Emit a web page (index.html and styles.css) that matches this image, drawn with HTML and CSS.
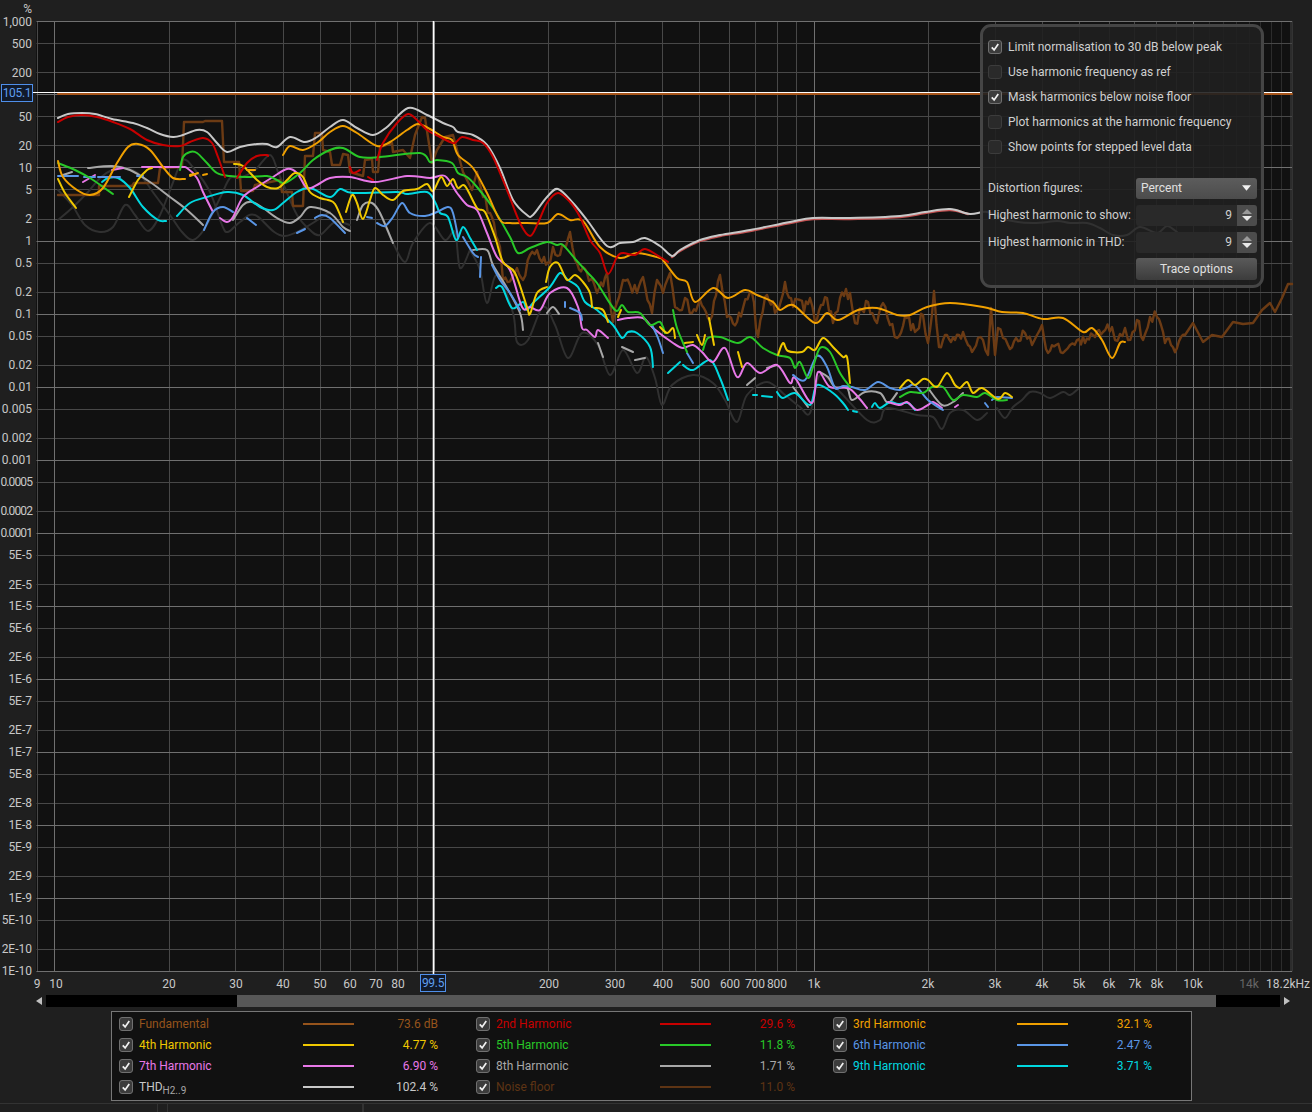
FILE: index.html
```html
<!DOCTYPE html>
<html lang="en">
<head>
<meta charset="utf-8">
<title>Distortion</title>
<link rel="stylesheet" href="styles.css">
</head>
<body>
<main class="app">
  <section class="chart">
    <svg class="plot" id="plot" width="1312" height="992" viewBox="0 0 1312 992">
      <rect class="plot-bg" x="36" y="21" width="1256" height="950"/>
      <g id="grid"></g>
      <g id="traces"></g>
      <line class="cursor" x1="33" y1="92.5" x2="1292" y2="92.5"/>
      <line class="cursor cursor-v" x1="433.5" y1="21" x2="433.5" y2="975"/>
      <g class="ticks y-ticks">
        <text x="32" y="13">%</text>
        <text x="32" y="26">1,000</text><text x="32" y="48">500</text><text x="32" y="77">200</text>
        <text x="32" y="121">50</text><text x="32" y="150">20</text><text x="32" y="172">10</text>
        <text x="32" y="194">5</text><text x="32" y="223">2</text><text x="32" y="245">1</text>
        <text x="32" y="267">0.5</text><text x="32" y="296">0.2</text><text x="32" y="318">0.1</text>
        <text x="32" y="340">0.05</text><text x="32" y="369">0.02</text><text x="32" y="391">0.01</text>
        <text x="32" y="413">0.005</text><text x="32" y="442">0.002</text><text x="32" y="464">0.001</text>
        <text x="32" y="486" class="tight">0.0005</text><text x="32" y="515" class="tight">0.0002</text><text x="32" y="537" class="tight">0.0001</text>
        <text x="32" y="559">5E-5</text><text x="32" y="589">2E-5</text><text x="32" y="610">1E-5</text>
        <text x="32" y="632">5E-6</text><text x="32" y="661">2E-6</text><text x="32" y="683">1E-6</text>
        <text x="32" y="705">5E-7</text><text x="32" y="734">2E-7</text><text x="32" y="756">1E-7</text>
        <text x="32" y="778">5E-8</text><text x="32" y="807">2E-8</text><text x="32" y="829">1E-8</text>
        <text x="32" y="851">5E-9</text><text x="32" y="880">2E-9</text><text x="32" y="902">1E-9</text>
        <text x="32" y="924">5E-10</text><text x="32" y="953">2E-10</text><text x="32" y="975">1E-10</text>
      </g>
      <g class="ticks x-ticks">
        <text x="37" y="988">9</text><text x="56" y="988">10</text><text x="169" y="988">20</text>
        <text x="236" y="988">30</text><text x="283" y="988">40</text><text x="320" y="988">50</text>
        <text x="350" y="988">60</text><text x="376" y="988">70</text><text x="398" y="988">80</text>
        <text x="549" y="988">200</text><text x="615" y="988">300</text><text x="663" y="988">400</text>
        <text x="700" y="988">500</text><text x="730" y="988">600</text><text x="755" y="988">700</text>
        <text x="777" y="988">800</text><text x="814" y="988">1k</text><text x="928" y="988">2k</text>
        <text x="995" y="988">3k</text><text x="1042" y="988">4k</text><text x="1079" y="988">5k</text>
        <text x="1109" y="988">6k</text><text x="1135" y="988">7k</text><text x="1157" y="988">8k</text>
        <text x="1193" y="988">10k</text><text x="1249" y="988" class="dim">14k</text>
        <text x="1288" y="988">18.2kHz</text>
      </g>
      <rect class="read-box" x="1.5" y="84.5" width="31" height="17"/>
      <text class="read-text" x="17" y="97">105.1</text>
      <rect class="read-box" x="420.5" y="974.5" width="25" height="17"/>
      <text class="read-text" x="433" y="987">99.5</text>
    </svg>

    <aside class="panel">
      <label class="check-row"><span class="box on"><svg viewBox="0 0 14 14"><path d="M3.2 7.4 6 10.4 10.8 3.6"/></svg></span>Limit normalisation to 30 dB below peak</label>
      <label class="check-row"><span class="box"></span>Use harmonic frequency as ref</label>
      <label class="check-row"><span class="box on"><svg viewBox="0 0 14 14"><path d="M3.2 7.4 6 10.4 10.8 3.6"/></svg></span>Mask harmonics below noise floor</label>
      <label class="check-row"><span class="box"></span>Plot harmonics at the harmonic frequency</label>
      <label class="check-row"><span class="box"></span>Show points for stepped level data</label>
      <div class="field first">
        <span class="field-label">Distortion figures:</span>
        <div class="select">Percent<svg viewBox="0 0 10 6"><path d="M0 0H10L5 6Z"/></svg></div>
      </div>
      <div class="field">
        <span class="field-label">Highest harmonic to show:</span>
        <div class="spin"><span class="spin-val">9</span><span class="spin-btn"><svg viewBox="0 0 10 14"><path class="up" d="M0 6 5 1 10 6Z"/><path d="M0 8H10L5 13Z"/></svg></span></div>
      </div>
      <div class="field">
        <span class="field-label">Highest harmonic in THD:</span>
        <div class="spin"><span class="spin-val">9</span><span class="spin-btn"><svg viewBox="0 0 10 14"><path class="up" d="M0 6 5 1 10 6Z"/><path d="M0 8H10L5 13Z"/></svg></span></div>
      </div>
      <div class="field btn-field"><button class="trace-btn" type="button">Trace options</button></div>
    </aside>
  </section>

  <div class="scrollbar">
    <svg class="arrow" viewBox="0 0 6 8"><path d="M6 0V8L0 4Z"/></svg>
    <div class="track"><div class="thumb"></div></div>
    <svg class="arrow" viewBox="0 0 6 8"><path d="M0 0V8L6 4Z"/></svg>
  </div>

  <section class="legend">
    <div class="item c-fund"><span class="box on"><svg viewBox="0 0 14 14"><path d="M3.2 7.4 6 10.4 10.8 3.6"/></svg></span><span class="name">Fundamental</span><i class="swatch"></i><span class="val">73.6 dB</span></div>
    <div class="item c-h2"><span class="box on"><svg viewBox="0 0 14 14"><path d="M3.2 7.4 6 10.4 10.8 3.6"/></svg></span><span class="name">2nd Harmonic</span><i class="swatch"></i><span class="val">29.6 %</span></div>
    <div class="item c-h3"><span class="box on"><svg viewBox="0 0 14 14"><path d="M3.2 7.4 6 10.4 10.8 3.6"/></svg></span><span class="name">3rd Harmonic</span><i class="swatch"></i><span class="val">32.1 %</span></div>
    <div class="item c-h4"><span class="box on"><svg viewBox="0 0 14 14"><path d="M3.2 7.4 6 10.4 10.8 3.6"/></svg></span><span class="name">4th Harmonic</span><i class="swatch"></i><span class="val">4.77 %</span></div>
    <div class="item c-h5"><span class="box on"><svg viewBox="0 0 14 14"><path d="M3.2 7.4 6 10.4 10.8 3.6"/></svg></span><span class="name">5th Harmonic</span><i class="swatch"></i><span class="val">11.8 %</span></div>
    <div class="item c-h6"><span class="box on"><svg viewBox="0 0 14 14"><path d="M3.2 7.4 6 10.4 10.8 3.6"/></svg></span><span class="name">6th Harmonic</span><i class="swatch"></i><span class="val">2.47 %</span></div>
    <div class="item c-h7"><span class="box on"><svg viewBox="0 0 14 14"><path d="M3.2 7.4 6 10.4 10.8 3.6"/></svg></span><span class="name">7th Harmonic</span><i class="swatch"></i><span class="val">6.90 %</span></div>
    <div class="item c-h8"><span class="box on"><svg viewBox="0 0 14 14"><path d="M3.2 7.4 6 10.4 10.8 3.6"/></svg></span><span class="name">8th Harmonic</span><i class="swatch"></i><span class="val">1.71 %</span></div>
    <div class="item c-h9"><span class="box on"><svg viewBox="0 0 14 14"><path d="M3.2 7.4 6 10.4 10.8 3.6"/></svg></span><span class="name">9th Harmonic</span><i class="swatch"></i><span class="val">3.71 %</span></div>
    <div class="item c-thd"><span class="box on"><svg viewBox="0 0 14 14"><path d="M3.2 7.4 6 10.4 10.8 3.6"/></svg></span><span class="name">THD<sub>H2..9</sub></span><i class="swatch"></i><span class="val">102.4 %</span></div>
    <div class="item c-noise"><span class="box on"><svg viewBox="0 0 14 14"><path d="M3.2 7.4 6 10.4 10.8 3.6"/></svg></span><span class="name">Noise floor</span><i class="swatch"></i><span class="val">11.0 %</span></div>
  </section>

  <footer class="status">
    <span class="cell w1"></span><span class="cell w2"></span><span class="cell w3"></span><span class="cell"></span>
  </footer>
</main>
<script src="plot.js"></script>
</body>
</html>
```

FILE: styles.css
```css
* { box-sizing: border-box; }
html, body { margin: 0; padding: 0; height: 100%; overflow: hidden; }
body {
  background: #1f1f1f;
  color: #d0d0d0;
  font-family: Roboto, "Noto Sans", sans-serif;
  font-size: 12px;
}
.app { width: 1312px; height: 1112px; display: flex; flex-direction: column; }

.chart { position: relative; height: 992px; flex: none; }
.plot { display: block; }
.plot-bg { fill: #111111; }
.grid-minor { stroke: #484848; stroke-width: 1; fill: none; }
.grid-major { stroke: #707070; stroke-width: 1; fill: none; }
.grid-faint { stroke: #2c2c2c; stroke-width: 1; fill: none; }
.trace { fill: none; stroke-width: 2; stroke-linecap: round; stroke-linejoin: round; }
.trace-noise { stroke: #6c3b14; stroke-width: 2.4; }
.trace-dim { stroke: #303030; }
.trace-under { stroke: #c05050; stroke-width: 2.4; }
.cursor { stroke: #ffffff; stroke-width: 1; }
.cursor-v { stroke-width: 1.6; }
.ticks text { font-family: Roboto, "Noto Sans", sans-serif; font-size: 12px; fill: #c8c8c8; }
.y-ticks text { text-anchor: end; }
.x-ticks text { text-anchor: middle; }
.ticks text.dim { fill: #666666; }
.ticks text.tight { letter-spacing: -0.9px; }
.read-box { fill: #111a2a; stroke: #4f8fea; stroke-width: 1; }
.read-text { font-family: Roboto, "Noto Sans", sans-serif; font-size: 12px; letter-spacing: -0.3px; fill: #5f9ff0; text-anchor: middle; }

.panel {
  position: absolute;
  left: 980px;
  top: 24px;
  width: 284px;
  height: 264px;
  padding: 7px 4px 0 5px;
  background: rgba(32, 32, 32, 0.9);
  border: 3px solid #454545;
  border-radius: 11px;
  display: flex;
  flex-direction: column;
}
.check-row { display: flex; align-items: center; gap: 6px; height: 25.2px; }
.box {
  flex: none;
  width: 14px;
  height: 14px;
  border: 1px solid #3c3c3c;
  border-radius: 3px;
  background: #2a2a2a;
  display: block;
}
.box.on { background: #3c3c3c; border-color: #707070; }
.box svg { display: block; width: 12px; height: 12px; }
.box path { fill: none; stroke: #f0f0f0; stroke-width: 2; }

.field { display: flex; align-items: center; justify-content: space-between; height: 27px; }
.field.first { margin-top: 15px; }
.field-label { white-space: nowrap; }
.select {
  width: 121px;
  height: 21px;
  padding: 0 5px;
  border-radius: 3px;
  background: linear-gradient(#5c5c5c, #4c4c4c);
  display: flex;
  align-items: center;
  justify-content: space-between;
  color: #e0e0e0;
}
.select svg { width: 9px; height: 6px; fill: #f0f0f0; margin-right: 1px; }
.spin {
  width: 121px;
  height: 21px;
  border-radius: 3px;
  background: #292929;
  display: flex;
  align-items: stretch;
  overflow: hidden;
}
.spin-val { flex: 1; text-align: right; padding-right: 5px; line-height: 21px; }
.spin-btn { width: 20px; background: #4c4c4c; display: flex; align-items: center; justify-content: center; }
.spin-btn svg { width: 10px; height: 14px; fill: #e8e8e8; }
.spin-btn .up { fill: #9a9a9a; }
.btn-field { justify-content: flex-end; height: 22px; margin-top: 2px; }
.trace-btn {
  width: 121px;
  height: 22px;
  border: 0;
  border-radius: 3px;
  color: #e0e0e0;
  font: inherit;
  background: linear-gradient(#5a5a5a, #3c3c3c);
  padding: 0;
}

.scrollbar { display: flex; align-items: center; height: 12px; margin-top: 3px; padding-left: 36px; gap: 4px; flex: none; }
.arrow { width: 6px; height: 8px; fill: #c0c0c0; flex: none; }
.track { width: 1234px; height: 12px; background: #000000; padding-left: 191px; }
.thumb { width: 979px; height: 12px; background: #575757; }

.legend {
  flex: none;
  width: 1081px;
  height: 90px;
  margin: 4px 0 0 111px;
  padding: 1px 0 0 7px;
  background: #111111;
  border: 1px solid #777777;
  display: grid;
  grid-template-columns: repeat(3, 357px);
  grid-auto-rows: 21px;
}
.item { display: grid; grid-template-columns: 14px 170px 51px 84px; align-items: center; color: var(--c); }
.name { padding-left: 6px; white-space: nowrap; }
.name sub { font-size: 10px; line-height: 0; color: #a8a8a8; }
.swatch { display: block; height: 2px; background: var(--c); }
.val { text-align: right; white-space: nowrap; }
.c-fund { --c: #96541c; }
.c-h2 { --c: #c80000; }
.c-h3 { --c: #f0a000; }
.c-h4 { --c: #f0c800; }
.c-h5 { --c: #28c828; }
.c-h6 { --c: #5a96e6; }
.c-h7 { --c: #e878e8; }
.c-h8 { --c: #a8a8a8; }
.c-h9 { --c: #00d8e0; }
.c-thd { --c: #c8c8c8; }
.c-noise { --c: #5e3414; }

.status { flex: 1; margin-top: 2px; border-top: 1px solid #333333; display: flex; }
.cell { border-right: 1px solid #333333; }
.w1 { width: 158px; }
.w2 { width: 10px; }
.w3 { width: 195px; }
```

FILE: plot.js
```js
// Frequency-response style plot: log grid plus hand-traced harmonic curves.
(function () {
  var NS = 'http://www.w3.org/2000/svg';
  var X0 = 54.3, XD = 379.6, Y0 = 21.3, YD = 73.08, TOP = 21, BOT = 971.5, L = 36.5, R = 1292;

  function fx(f) { return Math.round(X0 + XD * Math.log10(f / 10)) + 0.5; }
  function fy(n, m) { return Math.round(Y0 + YD * (n - Math.log10(m))) + 0.5; }
  function add(parent, cls, d) {
    var p = document.createElementNS(NS, 'path');
    p.setAttribute('class', cls);
    p.setAttribute('d', d);
    parent.appendChild(p);
    return p;
  }

  var grid = document.getElementById('grid');
  var minor = '', major = '', faint = '';
  function v(f) { return 'M' + fx(f) + ' ' + TOP + 'V' + BOT; }
  function h(y) { return 'M' + L + ' ' + y + 'H' + R; }
  minor += v(9);
  [10, 100, 1000].forEach(function (d) {
    major += v(d);
    [2, 3, 4, 5, 6, 7, 8, 9].forEach(function (m) { minor += v(d * m); });
  });
  major += v(10000);
  for (var k = 11000; k <= 18000; k += 1000) faint += v(k);
  major += h(Math.round(Y0) + 0.5);
  for (var n = 0; n < 13; n++) {
    major += h(fy(n + 1, 1));
    minor += h(fy(n + 1, 5)) + h(fy(n + 1, 2));
  }
  minor += 'M' + R + ' ' + TOP + 'V' + BOT;
  add(grid, 'grid-faint', faint);
  add(grid, 'grid-minor', minor);
  add(grid, 'grid-major', major);

  function smooth(a) {
    var pts = [];
    for (var i = 0; i < a.length; i += 2) pts.push([a[i], a[i + 1]]);
    var d = 'M' + pts[0][0] + ' ' + pts[0][1];
    for (var j = 0; j < pts.length - 1; j++) {
      var p0 = pts[j - 1] || pts[j], p1 = pts[j], p2 = pts[j + 1], p3 = pts[j + 2] || p2;
      d += 'C' + (p1[0] + (p2[0] - p0[0]) / 6).toFixed(1) + ' ' + (p1[1] + (p2[1] - p0[1]) / 6).toFixed(1) + ' ' +
        (p2[0] - (p3[0] - p1[0]) / 6).toFixed(1) + ' ' + (p2[1] - (p3[1] - p1[1]) / 6).toFixed(1) + ' ' +
        p2[0] + ' ' + p2[1];
    }
    return d;
  }

  // The measured noise floor is jagged past 130 Hz: fill the traced outline with fine repeatable ripple.
  function jagged(a) {
    var seed = 7;
    function rnd() { seed = (seed * 16807) % 2147483647; return seed / 2147483647 - 0.5; }
    var d = 'M' + a[0] + ' ' + a[1];
    for (var i = 2; i < a.length; i += 2) {
      var x0 = a[i - 2], y0 = a[i - 1], x1 = a[i], y1 = a[i + 1], dx = x1 - x0;
      if (x0 > 480 && x0 < 1180 && dx > 3) {
        var steps = Math.floor(dx / 2);
        for (var s = 1; s < steps; s++) {
          var t = s / steps;
          d += 'L' + (x0 + dx * t).toFixed(1) + ' ' + (y0 + (y1 - y0) * t + rnd() * 12).toFixed(1);
        }
      }
      d += 'L' + x1 + ' ' + y1;
    }
    return d;
  }

  var noise = [58,195,99,195,99,186,132,186,134,183,158,183,160,168,182,167,184,122,203,122,205,121,222,121,224,162,239,162,241,191,253,191,255,185,280,180,282,192,292,192,293,206,303,206,305,156,313,156,315,133,322,133,323,150,330,152,332,165,340,165,343,154,348,155,350,172,363,176,365,160,372,159,373,172,378,172,380,147,392,143,393,152,403,150,410,158,415,135,422,117,425,118,432,163,437,150,445,137,453,135,463,172,472,190,477,172,483,197,490,213,500,247,503,280,512,278,517,268,523,280,530,255,537,250,542,262,550,263,553,247,560,255,570,232,575,260,587,273,597,293,607,273,613,322,623,280,630,285,637,293,643,277,652,313,657,280,663,293,670,273,675,307,682,310,685,298,692,313,700,300,710,320,720,275,727,317,737,322,743,308,752,293,758,337,765,297,777,310,785,282,793,307,800,300,804,312,810,298,815,322,821,305,827,298,833,323,840,298,850,293,855,323,862,310,868,302,877,323,883,303,890,325,897,338,907,318,915,332,923,315,928,343,934,291,939,347,947,335,955,340,963,332,968,345,972,352,978,338,983,340,988,355,991,308,995,355,998,328,1003,338,1008,345,1016,338,1025,333,1032,345,1037,335,1042,325,1048,353,1056,345,1063,353,1070,345,1077,340,1085,343,1093,335,1103,332,1112,327,1115,340,1120,334,1125,328,1128,340,1137,320,1143,340,1150,317,1157,317,1165,343,1171,345,1177,348,1185,335,1193,323,1203,342,1212,335,1222,337,1233,322,1243,324,1253,323,1262,310,1270,303,1275,312,1282,298,1288,284,1292,284];

  var dim = [
    [58,220,72,208,88,192,100,178,112,170,125,168,140,175,155,195,170,215,182,232,193,240,205,228,220,198,230,178,240,178,255,170,270,155,278,172,285,188,297,215,310,230,320,235,335,222,350,225],
    [58,190,72,205,85,225,100,232,113,227,125,205,135,215,148,231,160,215,172,185,183,160,195,170,210,192,222,225,228,232,240,222,255,215,285,236,330,212],
    [380,213,393,243,405,262,413,243,430,223,445,240,455,232,460,268,470,250],
    [470,250,480,270,487,303,497,275,513,313,517,342,528,340,543,307,555,325,568,358,582,333,598,345,610,375,623,350,637,373,646,357,655,378,662,405,672,385,693,375,713,383,725,400,737,422,747,395,767,382,785,395,800,407,810,413,820,375,840,392,867,420,880,420,887,408,917,415,933,417,942,429,950,413,963,410,977,420,987,413],
    [997,408,1005,418,1013,407,1022,400,1030,392,1040,393,1050,398,1063,392,1070,395,1078,389]
  ];

  var thdTail = [672,257,680,251,700,241,720,236,750,231,790,223,813,219,850,219,900,217,925,213,950,210,968,214];

  var traces = [
    { c: '#c8c8c8', s: [[58,118,68,114,82,113,95,114,112,119,133,123,147,128,160,134,173,137,183,135,197,130,207,132,217,143,227,152,240,147,257,144,267,144,277,147,290,137,305,142,317,137,330,127,343,120,357,128,373,135,387,127,408,108,427,115,443,123,453,127,458,132,473,135,487,145,500,168,513,200,527,215,533,215,547,197,558,189,573,203,587,220,607,246,620,243,633,242,645,238,660,246,672,256,680,250,700,240,720,235,750,230,790,222,813,218,850,218,900,216,925,212,950,209,970,214,987,212,1007,220,1033,223,1057,221,1070,223,1087,223,1100,228,1113,235,1127,235,1140,227,1157,233,1167,226,1177,232]] },
    { c: '#a8a8a8', s: [[63,175,72,172],[88,168,112,166,130,170,150,182,170,197,187,210,203,225],[233,220,243,205,252,202,263,208,277,218,290,223,300,217,310,207,330,213,343,227,350,231],[357,220,363,205,372,203,380,213,393,243],[473,250,487,250,493,265,507,288,520,313,523,330],[547,313,553,307,559,314],[598,343,603,357],[622,347,633,352],[635,360,645,358],[747,385,755,378],[767,368,777,365],[793,387,808,407],[820,372,828,377,835,387,847,388,852,400,865,392,880,393,888,403,897,393],[928,388,942,405,953,402,963,393]] },
    { c: '#00d8e0', s: [[102,182,108,178,118,178,130,188,143,207,158,220,166,221],[177,216,190,203,207,197,227,192,243,195,260,207,273,210,283,203,297,192,310,188,330,197,340,189,353,193,397,192,407,194,427,192,435,202,440,213,448,217,456,240,463,227,470,238,477,250],[496,288,502,287,512,308,523,302,527,310,533,303,550,287,560,273,568,280,578,287,585,302,597,310,613,325,622,338,628,332,637,333,650,347,653,367],[668,373,680,362],[683,365,693,370,710,360,720,378,728,400],[753,395,757,395],[762,396,772,397],[777,392,783,398,795,393,810,405,817,385,833,393,843,403,848,410],[853,411,857,412],[872,407,875,403,880,408,890,402,898,404,908,403,915,410]] },
    { c: '#e878e8', s: [[83,182,95,175],[112,170,123,168],[142,167,180,167,187,168,197,178,203,192,213,212],[220,218,227,222,233,217,243,197,257,187,273,177,287,169,297,173,307,188,317,185,330,178,350,177,375,182,407,176,430,178,445,176,457,193,467,205,477,210,487,233,497,257,510,270,522,307,530,307,540,310,550,293,567,288,578,307,582,328,587,330,595,337,598,330,608,338],[618,320,628,318,643,318,653,328,673,343,683,348,693,345,702,352,713,362,725,348,737,377,747,363,760,373,777,365,790,383,795,378,812,403,818,372,830,387,848,388,858,397,867,408],[888,402,900,405,907,402,917,410,928,405,933,402,942,408],[955,407,958,405]] },
    { c: '#5a96e6', s: [[58,176,78,176],[84,177,95,177],[98,177,120,177],[137,176,143,176],[204,230,213,212,223,207,233,212],[247,218,256,225],[297,233,305,229],[315,218,322,215,330,218,345,233],[367,217,372,218],[377,223,385,226,393,217,402,203,410,213,425,216,437,212,448,207,453,213,458,237],[463,237,473,253,478,257],[481,257,480,277],[492,265,500,280,510,293,520,310],[565,302,565,307],[570,308,580,313,582,320],[652,325,658,338,663,353],[687,353,693,363],[793,375,805,380,817,356,827,367,835,388,843,386,852,387,865,390,878,382,890,388,900,390,908,387,915,385,928,400,943,410],[985,403,988,407],[992,400,997,397,1012,398]] },
    { c: '#28c828', s: [[58,163,75,170,90,178,103,187,113,194],[180,170,183,157,190,152,197,153,207,163,217,173,230,176,247,177,267,176,277,180,285,183,300,173,313,160,330,150,343,148,360,157,380,157,420,153,430,162,437,160,452,163,458,173,467,177,477,187,493,208,510,237,518,253,530,248,547,242,557,245,563,245,577,261,587,272,597,283,615,310,622,305,628,312,640,313,650,325,660,322,665,333],[673,310,677,328,687,352],[703,350,708,338,720,337,738,343,750,337,763,348,777,355,790,358,795,368,800,362,808,378,813,367,820,348,830,352,840,373,850,387],[900,397,910,392,923,393,932,387,943,387,953,400,963,395,977,397,985,393,997,400,1007,400]] },
    { c: '#f0c800', s: [[58,179,65,193,76,208],[129,197,138,180,147,170,152,168],[190,175,194,174],[234,164,243,166,257,180,267,187,278,188,287,180,295,173,303,177,310,192,320,198,328,200,335,204,343,222],[346,212,352,195,357,203,363,219,370,200,375,188,383,195,393,200,403,191,417,189,427,184,433,191,441,177,447,186,453,179,458,188,465,186,477,208,485,212,495,237,503,262,515,273,527,307,530,314,537,293,547,287],[546,282,550,267,558,263,567,280,575,275,583,282,590,293,592,307],[595,308,603,310,608,322],[618,317,621,310],[660,327,667,333,673,328,675,338],[685,343,693,342],[697,335,702,345,705,335],[709,318,714,345],[738,352,742,367],[778,355,783,343,788,351,802,352,808,347,815,350,823,338,833,347,843,357,847,357,850,383],[900,388,908,380,915,385,923,379,928,380,937,387,947,373,955,385,960,388,967,382,973,393,982,388,998,399,1005,393,1012,397]] },
    { c: '#f0a000', s: [[58,161,63,177,77,190,90,195,103,188,117,163,128,147,138,144,150,150,163,167,173,178,185,179],[190,176,198,173],[203,175,207,174],[247,170,255,170],[283,155,290,146,303,150,317,143,330,132,343,126,357,133,377,146,390,142,407,130,418,124,430,129,443,137,452,140,458,155,473,168,487,193,500,220,510,223,527,223,547,223,558,214,570,220,583,221,600,247,620,258,637,253,660,258,663,260,677,278,687,282,695,302,713,288,728,298,745,290,757,295,773,302,780,310,793,305,815,323,827,313,838,320,858,310,877,308,897,315,910,315,927,307,950,303,983,307,1002,312,1023,313,1043,319,1063,318,1083,332,1092,328,1102,340,1112,358,1120,343,1125,342]] },
    { c: '#c80000', s: [[58,122,68,117,82,115,97,117,113,122,130,129,147,140,163,145,180,146,190,142,203,138,212,143,218,157,225,177],[237,178,247,163,257,156,267,155,268,156],[350,167,353,173,360,170],[368,177,373,180],[377,160,383,143,397,123,408,114,417,120,427,130,440,137,450,142,455,143,462,137,473,140,483,143,493,157,507,190,520,223,530,236,538,223,547,203,558,193,570,202,580,217,590,240,600,253,608,274,617,257,623,253,635,255,645,249,660,257,668,262]] }
  ];

  var g = document.getElementById('traces');
  dim.forEach(function (a) { add(g, 'trace trace-dim', smooth(a)); });
  add(g, 'trace trace-noise', jagged(noise));
  add(g, 'trace trace-under', smooth(thdTail));
  traces.forEach(function (t) {
    t.s.forEach(function (a) { add(g, 'trace', smooth(a)).style.stroke = t.c; });
  });
  add(g, 'trace', 'M58 94H1292').style.stroke = '#a8551a';
})();
```
